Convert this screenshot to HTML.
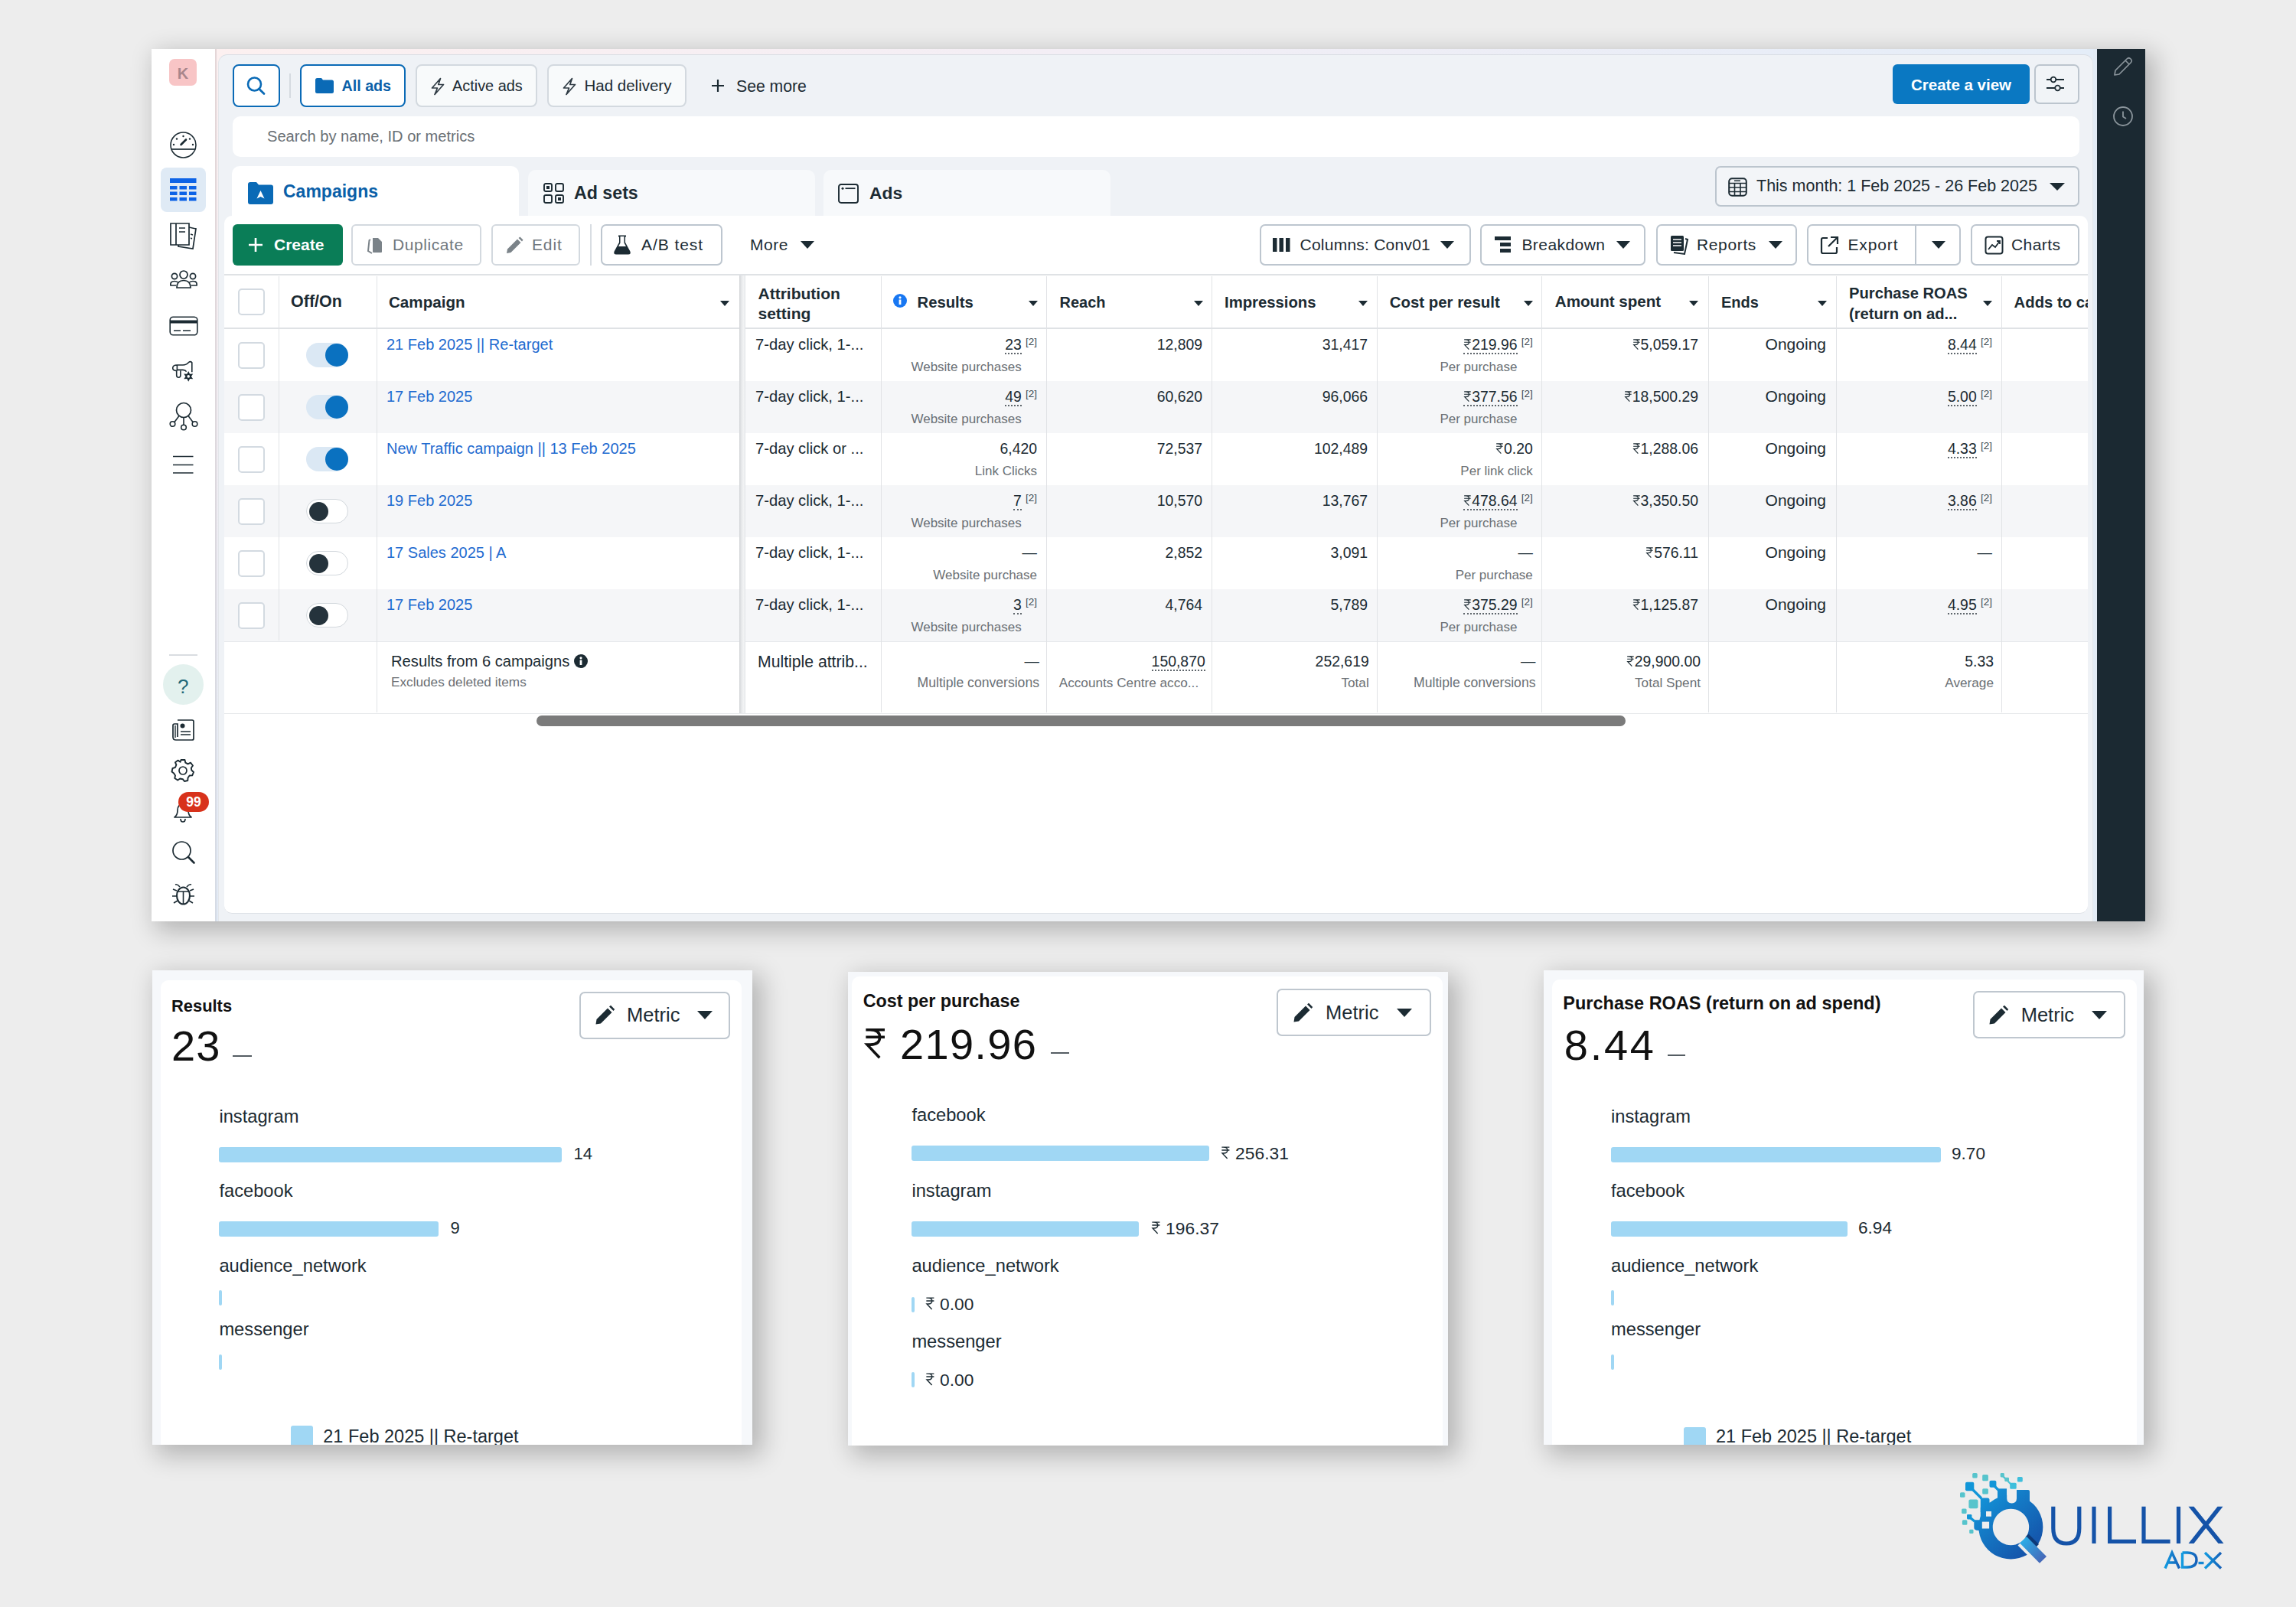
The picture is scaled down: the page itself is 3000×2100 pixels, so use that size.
<!DOCTYPE html>
<html><head><meta charset="utf-8"><style>*{box-sizing:border-box;margin:0;padding:0}
html,body{width:3000px;height:2100px;overflow:hidden}
body{background:#ededed;font-family:"Liberation Sans",sans-serif;color:#1c2b33;position:relative}
.a{position:absolute}
svg.a{overflow:visible}
.t{position:absolute;white-space:nowrap;line-height:1}
.rs{display:inline-block;width:0.56em;height:0.72em;vertical-align:0;overflow:visible}
#main{left:198px;top:64px;width:2605px;height:1140px;background:#fff;box-shadow:9px 9px 30px 4px rgba(0,0,0,.24)}
</style></head><body>
<div class="a" id="main"></div>
<div class="a" style="left:198px;top:64px;width:83px;height:1140px;background:#fff"></div>
<div class="a" style="left:281px;top:64px;width:1.5px;height:1140px;background:linear-gradient(#e4d6d7,#d5dbe5)"></div>
<div class="a" style="left:282.5px;top:64px;width:2457.5px;height:1140px;background:linear-gradient(90deg,#fcf0f0,#f3eef5 45%,#e4edf8)"></div>
<div class="a" style="left:282.5px;top:71px;width:2.5px;height:1133px;background:linear-gradient(#fbeff0,#e2eaf5)"></div>
<div class="a" style="left:285px;top:71px;width:2450px;height:1133px;background:#eff2f6;border-radius:12px 12px 0 0;border-top:1.5px solid #d9dde3;border-left:1.5px solid #e3e6ea;border-right:1.5px solid #e3e6ea"></div>
<div class="a" style="left:2735px;top:64px;width:5px;height:1140px;background:#e3ebf5"></div>
<div class="a" style="left:2740px;top:64px;width:63px;height:1140px;background:#1b2932"></div>
<div class="a" style="left:293px;top:282px;width:2435px;height:912px;background:#fff;border-radius:10px;border-bottom:1.5px solid #dde1e6"></div>
<div class="a" style="left:303px;top:217px;width:375px;height:70px;background:#fff;border-radius:10px 10px 0 0"></div>
<div class="a" style="left:690px;top:222px;width:375px;height:60px;background:#f7f9fb;border-radius:10px 10px 0 0"></div>
<div class="a" style="left:1076px;top:222px;width:375px;height:60px;background:#f7f9fb;border-radius:10px 10px 0 0"></div>
<div class="a" style="left:304px;top:84px;width:62px;height:56px;border:2px solid #0a6ab6;border-radius:8px;background:#fff"></div>
<svg class="a" style="left:320px;top:98px;" width="30" height="30" viewBox="0 0 30 30"><circle cx="12.5" cy="12" r="8.5" fill="none" stroke="#0a6ab6" stroke-width="2.6"/><line x1="18.6" y1="18.2" x2="25" y2="24.6" stroke="#0a6ab6" stroke-width="2.8" stroke-linecap="round"/></svg>
<div class="a" style="left:378px;top:96px;width:2px;height:32px;background:#d5dae0"></div>
<div class="a" style="left:392px;top:84px;width:138px;height:56px;border:2px solid #0a6ab6;border-radius:8px;background:#fff"></div>
<svg class="a" style="left:411px;top:101px;" width="26" height="22" viewBox="0 0 26 22"><path d="M1 3.5 Q1 1 3.5 1 L9 1 L11 3.5 L22.5 3.5 Q25 3.5 25 6 L25 18.5 Q25 21 22.5 21 L3.5 21 Q1 21 1 18.5 Z" fill="#0a6ab6"/></svg>
<div class="t" style="left:446.5px;top:102.8px;font-size:19.7px;font-weight:700;color:#0a5fa8;">All ads</div>
<div class="a" style="left:543px;top:84px;width:159px;height:56px;border:2px solid #d3d9df;border-radius:8px;background:#f8fafb"></div>
<svg class="a" style="left:563px;top:101px;" width="18" height="24" viewBox="0 0 18 24"><path d="M12.5 1.5 L1.5 14 H8.5 L5 22.5 L16.5 9.5 H9.8 Z" fill="none" stroke="#2f3b44" stroke-width="1.7" stroke-linejoin="round"/></svg>
<div class="t" style="left:591.0px;top:102.7px;font-size:19.9px;color:#1c2b33;">Active ads</div>
<div class="a" style="left:715px;top:84px;width:182px;height:56px;border:2px solid #d3d9df;border-radius:8px;background:#f8fafb"></div>
<svg class="a" style="left:735px;top:101px;" width="18" height="24" viewBox="0 0 18 24"><path d="M12.5 1.5 L1.5 14 H8.5 L5 22.5 L16.5 9.5 H9.8 Z" fill="none" stroke="#2f3b44" stroke-width="1.7" stroke-linejoin="round"/></svg>
<div class="t" style="left:763.5px;top:102.1px;font-size:20.5px;color:#1c2b33;">Had delivery</div>
<svg class="a" style="left:929px;top:103px;" width="18" height="18" viewBox="0 0 18 18"><path d="M9 1 V17 M1 9 H17" stroke="#1c2b33" stroke-width="2.2"/></svg>
<div class="t" style="left:962.0px;top:101.6px;font-size:21.2px;color:#1c2b33;">See more</div>
<div class="a" style="left:304px;top:152px;width:2413px;height:53px;background:#fff;border-radius:10px"></div>
<div class="t" style="left:349.0px;top:168.0px;font-size:20.1px;color:#6a7075;">Search by name, ID or metrics</div>
<div class="a" style="left:2473px;top:84px;width:179px;height:52px;background:#0a78c2;border-radius:6px"></div>
<div class="t" style="left:2497.0px;top:100.6px;font-size:20.5px;font-weight:700;color:#fff;">Create a view</div>
<div class="a" style="left:2658px;top:84px;width:59px;height:52px;border:2px solid #bcc5ce;border-radius:7px;background:#f1f4f7"></div>
<svg class="a" style="left:2673px;top:98px;" width="30" height="24" viewBox="0 0 30 24"><path d="M1 6 H6 M14 6 H24 M1 17 H12 M19 17 H24" stroke="#1c2b33" stroke-width="1.8"/><circle cx="10" cy="6" r="3.3" fill="none" stroke="#1c2b33" stroke-width="1.8"/><circle cx="15.5" cy="17" r="3.3" fill="none" stroke="#1c2b33" stroke-width="1.8"/></svg>
<div class="a" style="left:2241px;top:217px;width:476px;height:53px;border:2px solid #bcc5ce;border-radius:7px;background:#f3f5f8"></div>
<svg class="a" style="left:2258px;top:232px;" width="25" height="25" viewBox="0 0 25 25"><rect x="1.2" y="1.2" width="22.6" height="22.6" rx="4" fill="none" stroke="#1c2b33" stroke-width="2"/><path d="M1.5 7.5 H23.5 M1.5 13 H23.5 M1.5 18.5 H23.5 M8.5 7.5 V23.5 M16 7.5 V23.5 M8 4.2 H16" stroke="#1c2b33" stroke-width="1.6"/></svg>
<div class="t" style="left:2295.0px;top:232.8px;font-size:21.5px;color:#1c2b33;">This month: 1 Feb 2025 - 26 Feb 2025</div>
<svg class="a" style="left:2677px;top:238px;" width="22" height="12" viewBox="0 0 22 12"><path d="M1 1 H21 L11 11 Z" fill="#1c2b33"/></svg>
<svg class="a" style="left:2760px;top:72px;" width="28" height="28" viewBox="0 0 28 28"><path d="M4 20 L19 5 Q21.5 2.5 24 5 Q26.5 7.5 24 10 L9 25 L3 26 Z M17 7 L22 12" fill="none" stroke="#8a949b" stroke-width="1.7" stroke-linejoin="round"/></svg>
<svg class="a" style="left:2760px;top:138px;" width="28" height="28" viewBox="0 0 28 28"><circle cx="14" cy="14" r="12" fill="none" stroke="#8a949b" stroke-width="1.8"/><path d="M14 7.5 V14.5 L18 17" fill="none" stroke="#8a949b" stroke-width="1.8"/></svg>
<svg class="a" style="left:324px;top:237px;" width="33" height="30" viewBox="0 0 33 30"><path d="M0 4 Q0 1 3 1 L11 1 L14 4.5 L30 4.5 Q33 4.5 33 7.5 L33 27 Q33 30 30 30 L3 30 Q0 30 0 27 Z" fill="#0a6ab6"/><path d="M11.5 22.5 L16.5 12 L21.5 22.5 L16.5 20 Z" fill="#fff"/></svg>
<div class="t" style="left:370.0px;top:238.5px;font-size:23px;font-weight:700;color:#0a5fa8;">Campaigns</div>
<svg class="a" style="left:710px;top:238.5px;" width="27" height="27" viewBox="0 0 27 27"><rect x="1" y="1" width="10" height="10" rx="2" fill="none" stroke="#1c2b33" stroke-width="1.9"/><rect x="16" y="1" width="10" height="10" rx="2" fill="none" stroke="#1c2b33" stroke-width="1.9"/><rect x="1" y="16" width="10" height="10" rx="2" fill="none" stroke="#1c2b33" stroke-width="1.9"/><rect x="16" y="16" width="10" height="10" rx="2" fill="none" stroke="#1c2b33" stroke-width="1.9"/><rect x="4" y="4" width="4" height="4" fill="#1c2b33"/><rect x="19" y="19" width="4" height="4" fill="#1c2b33"/></svg>
<div class="t" style="left:750.0px;top:240.7px;font-size:23.2px;font-weight:700;color:#1c2b33;">Ad sets</div>
<svg class="a" style="left:1095px;top:239.5px;" width="27" height="26" viewBox="0 0 27 26"><rect x="1" y="1" width="25" height="24" rx="3" fill="none" stroke="#1c2b33" stroke-width="1.9"/><circle cx="6" cy="6.2" r="1.5" fill="#1c2b33"/><path d="M9.5 6.2 H22.5" stroke="#1c2b33" stroke-width="1.7"/></svg>
<div class="t" style="left:1136.0px;top:241.0px;font-size:22.8px;font-weight:700;color:#1c2b33;">Ads</div>
<div class="a" style="left:304px;top:293px;width:144px;height:54px;background:#0a7d57;border-radius:6px"></div>
<svg class="a" style="left:323px;top:309px;" width="22" height="22" viewBox="0 0 22 22"><path d="M11 2 V20 M2 11 H20" stroke="#fff" stroke-width="2.6"/></svg>
<div class="t" style="left:358.0px;top:309.2px;font-size:21px;font-weight:700;color:#fff;">Create</div>
<div class="a" style="left:459px;top:293px;width:170px;height:54px;border:2px solid #d3d9df;border-radius:6px;background:#fff"></div>
<svg class="a" style="left:478px;top:308px;" width="24" height="24" viewBox="0 0 24 24"><path d="M9 3 L16 3 L21 8 L21 21 Q21 22 20 22 L10 22 Q9 22 9 21 Z" fill="#7b8389"/><path d="M6 5 L4.5 6 L3 20 L8 23" fill="none" stroke="#7b8389" stroke-width="2"/></svg>
<div class="t" style="left:513.0px;top:309.2px;font-size:21px;color:#70777d;letter-spacing:0.58px">Duplicate</div>
<div class="a" style="left:642px;top:293px;width:116px;height:54px;border:2px solid #d3d9df;border-radius:6px;background:#fff"></div>
<svg class="a" style="left:660px;top:309px;" width="24" height="24" viewBox="0 0 24 24"><path d="M2 22 L3 16.5 L16 3.5 L20.5 8 L7.5 21 Z" fill="#7b8389"/><path d="M17.5 2 L19.5 0.5 L23.5 4.5 L22 6.5 Z" fill="#7b8389"/></svg>
<div class="t" style="left:695.0px;top:309.2px;font-size:21px;color:#70777d;letter-spacing:0.85px">Edit</div>
<div class="a" style="left:771px;top:293px;width:2px;height:54px;background:#d8dde2"></div>
<div class="a" style="left:785px;top:293px;width:159px;height:54px;border:2px solid #bdc6cf;border-radius:7px;background:#fff"></div>
<svg class="a" style="left:801px;top:307px;" width="24" height="26" viewBox="0 0 24 26"><path d="M7 1.5 H17 M9 2 V10 L2.5 22 Q1.5 24.5 4 24.5 H20 Q22.5 24.5 21.5 22 L15 10 V2" fill="#1c2b33" stroke="#1c2b33" stroke-width="2" stroke-linejoin="round"/><path d="M9.5 2 V10.5 L7 15 H17 L14.5 10.5 V2 Z" fill="#fff"/></svg>
<div class="t" style="left:838.0px;top:309.2px;font-size:21px;color:#1c2b33;letter-spacing:0.94px">A/B test</div>
<div class="t" style="left:980.0px;top:309.2px;font-size:21px;color:#1c2b33;letter-spacing:0.53px">More</div>
<svg class="a" style="left:1046px;top:315px;" width="18" height="10" viewBox="0 0 18 10"><path d="M0 0 H18 L9 10 Z" fill="#1c2b33"/></svg>
<div class="a" style="left:1646px;top:293px;width:276px;height:54px;border:2px solid #bdc6cf;border-radius:7px;background:#fff"></div>
<div class="a" style="left:1934px;top:293px;width:216px;height:54px;border:2px solid #bdc6cf;border-radius:7px;background:#fff"></div>
<div class="a" style="left:2164px;top:293px;width:184px;height:54px;border:2px solid #bdc6cf;border-radius:7px;background:#fff"></div>
<div class="a" style="left:2361px;top:293px;width:201px;height:54px;border:2px solid #bdc6cf;border-radius:7px;background:#fff"></div>
<div class="a" style="left:2575px;top:293px;width:142px;height:54px;border:2px solid #bdc6cf;border-radius:7px;background:#fff"></div>
<div class="a" style="left:2502px;top:295px;width:2px;height:50px;background:#bdc6cf"></div>
<svg class="a" style="left:1663px;top:310px;" width="24" height="20" viewBox="0 0 24 20"><rect x="0" y="1" width="5.5" height="18" fill="#1c2b33"/><rect x="8.5" y="1" width="5.5" height="18" fill="#1c2b33"/><rect x="17" y="1" width="5.5" height="18" fill="#1c2b33"/></svg>
<div class="t" style="left:1698.5px;top:309.2px;font-size:21px;color:#1c2b33;letter-spacing:0.24px">Columns: Conv01</div>
<svg class="a" style="left:1882px;top:315px;" width="18" height="10" viewBox="0 0 18 10"><path d="M0 0 H18 L9 10 Z" fill="#1c2b33"/></svg>
<svg class="a" style="left:1952px;top:308px;" width="24" height="24" viewBox="0 0 24 24"><rect x="1" y="1" width="21" height="5" fill="#1c2b33"/><rect x="8" y="9" width="14" height="5" fill="#1c2b33"/><rect x="8" y="17" width="14" height="5" fill="#1c2b33"/></svg>
<div class="t" style="left:1988.4px;top:309.2px;font-size:21px;color:#1c2b33;letter-spacing:0.44px">Breakdown</div>
<svg class="a" style="left:2112px;top:315px;" width="18" height="10" viewBox="0 0 18 10"><path d="M0 0 H18 L9 10 Z" fill="#1c2b33"/></svg>
<svg class="a" style="left:2181px;top:307px;" width="26" height="26" viewBox="0 0 26 26"><rect x="2" y="1" width="17" height="20" rx="1.5" fill="#1c2b33"/><path d="M5 6 H16 M5 10 H16 M5 14 H16" stroke="#fff" stroke-width="1.6"/><path d="M21 5 L24 6 L20 25 L6 23" fill="none" stroke="#1c2b33" stroke-width="2"/></svg>
<div class="t" style="left:2217.0px;top:309.2px;font-size:21px;color:#1c2b33;letter-spacing:0.64px">Reports</div>
<svg class="a" style="left:2311px;top:315px;" width="18" height="10" viewBox="0 0 18 10"><path d="M0 0 H18 L9 10 Z" fill="#1c2b33"/></svg>
<svg class="a" style="left:2378px;top:308px;" width="25" height="25" viewBox="0 0 25 25"><path d="M10 3 H4 Q2 3 2 5 V21 Q2 23 4 23 H20 Q22 23 22 21 V15" fill="none" stroke="#1c2b33" stroke-width="2.2"/><path d="M14 2 H23 V11 M23 2 L11 14" fill="none" stroke="#1c2b33" stroke-width="2.2"/></svg>
<div class="t" style="left:2414.4px;top:309.2px;font-size:21px;color:#1c2b33;letter-spacing:0.88px">Export</div>
<svg class="a" style="left:2524px;top:315px;" width="18" height="10" viewBox="0 0 18 10"><path d="M0 0 H18 L9 10 Z" fill="#1c2b33"/></svg>
<svg class="a" style="left:2593px;top:308px;" width="25" height="25" viewBox="0 0 25 25"><rect x="1.5" y="1.5" width="22" height="22" rx="3" fill="none" stroke="#1c2b33" stroke-width="2"/><path d="M5 18 L10 12 L14 15 L20 7 M16 7 H20 V11" fill="none" stroke="#1c2b33" stroke-width="1.8"/></svg>
<div class="t" style="left:2628.0px;top:309.2px;font-size:21px;color:#1c2b33;letter-spacing:0.45px">Charts</div>
<div class="a" style="left:293px;top:498px;width:2435px;height:68px;background:#f5f6f8"></div>
<div class="a" style="left:293px;top:634px;width:2435px;height:68px;background:#f5f6f8"></div>
<div class="a" style="left:293px;top:770px;width:2435px;height:68px;background:#f5f6f8"></div>
<div class="a" style="left:293px;top:358px;width:2435px;height:2px;background:#dfe2e5"></div>
<div class="a" style="left:293px;top:428px;width:2435px;height:2px;background:#dfe2e5"></div>
<div class="a" style="left:293px;top:838px;width:2435px;height:1px;background:#e6e8eb"></div>
<div class="a" style="left:293px;top:932px;width:2435px;height:1px;background:#e6e8eb"></div>
<div class="a" style="left:364px;top:361px;width:1px;height:476px;background:#e1e3e6"></div>
<div class="a" style="left:492px;top:361px;width:1px;height:570px;background:#e1e3e6"></div>
<div class="a" style="left:1151px;top:361px;width:1px;height:570px;background:#e1e3e6"></div>
<div class="a" style="left:1367px;top:361px;width:1px;height:570px;background:#e1e3e6"></div>
<div class="a" style="left:1583px;top:361px;width:1px;height:570px;background:#e1e3e6"></div>
<div class="a" style="left:1799px;top:361px;width:1px;height:570px;background:#e1e3e6"></div>
<div class="a" style="left:2014px;top:361px;width:1px;height:570px;background:#e1e3e6"></div>
<div class="a" style="left:2232px;top:361px;width:1px;height:570px;background:#e1e3e6"></div>
<div class="a" style="left:2399px;top:361px;width:1px;height:570px;background:#e1e3e6"></div>
<div class="a" style="left:2615px;top:361px;width:1px;height:570px;background:#e1e3e6"></div>
<div class="a" style="left:966px;top:360px;width:8px;height:572px;background:linear-gradient(90deg,#d2d4d7,#e9ebed 40%,#f3f4f5 75%,#dfe2e5)"></div>
<div class="a" style="left:311px;top:377px;width:35px;height:35px;border:2px solid #d3dae1;border-radius:5px;background:#fff"></div>
<div class="t" style="left:380.0px;top:383.8px;font-size:21.5px;font-weight:700;color:#1c2b33;">Off/On</div>
<div class="t" style="left:508.0px;top:384.6px;font-size:20.6px;font-weight:700;color:#1c2b33;">Campaign</div>
<svg class="a" style="left:940.7px;top:393.0px;" width="12" height="7" viewBox="0 0 12 7"><path d="M0 0 H12 L6 7 Z" fill="#1c2b33"/></svg>
<div class="t" style="left:990.5px;top:372.7px;font-size:21.0px;font-weight:700;color:#1c2b33;">Attribution</div>
<div class="t" style="left:990.5px;top:399.2px;font-size:21.0px;font-weight:700;color:#1c2b33;">setting</div>
<svg class="a" style="left:1167px;top:384px;" width="18" height="18" viewBox="0 0 18 18"><circle cx="9" cy="9" r="9" fill="#1877f2"/><rect x="7.6" y="7.5" width="2.8" height="6.5" fill="#fff"/><circle cx="9" cy="4.8" r="1.6" fill="#fff"/></svg>
<div class="t" style="left:1198.5px;top:384.6px;font-size:20.3px;font-weight:700;color:#1c2b33;">Results</div>
<svg class="a" style="left:1343.5px;top:393.0px;" width="12" height="7" viewBox="0 0 12 7"><path d="M0 0 H12 L6 7 Z" fill="#1c2b33"/></svg>
<div class="t" style="left:1384.5px;top:384.9px;font-size:20.0px;font-weight:700;color:#1c2b33;">Reach</div>
<svg class="a" style="left:1559.7px;top:393.0px;" width="12" height="7" viewBox="0 0 12 7"><path d="M0 0 H12 L6 7 Z" fill="#1c2b33"/></svg>
<div class="t" style="left:1600.0px;top:384.6px;font-size:20.3px;font-weight:700;color:#1c2b33;">Impressions</div>
<svg class="a" style="left:1775px;top:393.0px;" width="12" height="7" viewBox="0 0 12 7"><path d="M0 0 H12 L6 7 Z" fill="#1c2b33"/></svg>
<div class="t" style="left:1815.8px;top:384.5px;font-size:20.4px;font-weight:700;color:#1c2b33;">Cost per result</div>
<svg class="a" style="left:1991px;top:393.0px;" width="12" height="7" viewBox="0 0 12 7"><path d="M0 0 H12 L6 7 Z" fill="#1c2b33"/></svg>
<div class="t" style="left:2031.8px;top:384.4px;font-size:20.6px;font-weight:700;color:#1c2b33;">Amount spent</div>
<svg class="a" style="left:2207px;top:393.0px;" width="12" height="7" viewBox="0 0 12 7"><path d="M0 0 H12 L6 7 Z" fill="#1c2b33"/></svg>
<div class="t" style="left:2249.0px;top:384.9px;font-size:20.0px;font-weight:700;color:#1c2b33;">Ends</div>
<svg class="a" style="left:2375px;top:393.0px;" width="12" height="7" viewBox="0 0 12 7"><path d="M0 0 H12 L6 7 Z" fill="#1c2b33"/></svg>
<div class="t" style="left:2416.0px;top:373.4px;font-size:20.2px;font-weight:700;color:#1c2b33;">Purchase ROAS</div>
<div class="t" style="left:2416.0px;top:399.9px;font-size:20.2px;font-weight:700;color:#1c2b33;">(return on ad...</div>
<svg class="a" style="left:2590.6px;top:393.0px;" width="12" height="7" viewBox="0 0 12 7"><path d="M0 0 H12 L6 7 Z" fill="#1c2b33"/></svg>
<div class="a" style="left:2615px;top:360px;width:113px;height:68px;overflow:hidden">
<div class="t" style="left:16.6px;top:24.6px;font-size:20.3px;font-weight:700;color:#1c2b33;">Adds to cart</div>
</div>
<div class="a" style="left:311px;top:447px;width:35px;height:35px;border:2px solid #d3dae1;border-radius:5px;background:#fff"></div>
<div class="a" style="left:400px;top:448px;width:55px;height:32px;background:#dbe8f4;border-radius:16px"></div>
<div class="a" style="left:425px;top:449px;width:30px;height:30px;background:#0a71c0;border-radius:50%"></div>
<div class="t" style="left:505.0px;top:440.1px;font-size:20.0px;color:#1f6bd0;">21 Feb 2025 || Re-target</div>
<div class="t" style="left:987.0px;top:439.9px;font-size:20.2px;color:#1c2b33;">7-day click, 1-...</div>
<div class="t" style="right:1665.3px;top:440.6px;font-size:19.4px;color:#1c2b33;"><span style="border-bottom:2px dotted #5f666c;padding-bottom:0px">23</span></div>
<div class="t" style="right:1645.0px;top:440.1px;font-size:13.5px;color:#3d474e;">[2]</div>
<div class="t" style="right:1665.3px;top:470.9px;font-size:17.0px;color:#6b7075;">Website purchases</div>
<div class="t" style="right:1429.0px;top:440.6px;font-size:19.4px;color:#1c2b33;">12,809</div>
<div class="t" style="right:1213.0px;top:440.6px;font-size:19.4px;color:#1c2b33;">31,417</div>
<div class="t" style="right:1017.5px;top:440.6px;font-size:19.4px;color:#1c2b33;"><span style="border-bottom:2px dotted #5f666c;padding-bottom:0px"><svg class="rs" viewBox="0 0 56 72"><path d="M6 5 H50 M6 22 H50 M16 5 Q38.5 5 38.5 22 Q38.5 39.5 17 39.5 H9 L38 70" fill="none" stroke="currentColor" stroke-width="6.3"/></svg>219.96</span></div>
<div class="t" style="right:997.2px;top:440.1px;font-size:13.5px;color:#3d474e;">[2]</div>
<div class="t" style="right:1017.5px;top:470.9px;font-size:17.0px;color:#6b7075;">Per purchase</div>
<div class="t" style="right:781.0px;top:440.6px;font-size:19.4px;color:#1c2b33;"><svg class="rs" viewBox="0 0 56 72"><path d="M6 5 H50 M6 22 H50 M16 5 Q38.5 5 38.5 22 Q38.5 39.5 17 39.5 H9 L38 70" fill="none" stroke="currentColor" stroke-width="6.3"/></svg>5,059.17</div>
<div class="t" style="right:614.0px;top:439.2px;font-size:21.0px;color:#1c2b33;">Ongoing</div>
<div class="t" style="right:417.3px;top:440.6px;font-size:19.4px;color:#1c2b33;"><span style="border-bottom:2px dotted #5f666c;padding-bottom:0px">8.44</span></div>
<div class="t" style="right:397.0px;top:440.1px;font-size:13.5px;color:#3d474e;">[2]</div>
<div class="a" style="left:311px;top:515px;width:35px;height:35px;border:2px solid #d3dae1;border-radius:5px;background:#fff"></div>
<div class="a" style="left:400px;top:516px;width:55px;height:32px;background:#dbe8f4;border-radius:16px"></div>
<div class="a" style="left:425px;top:517px;width:30px;height:30px;background:#0a71c0;border-radius:50%"></div>
<div class="t" style="left:505.0px;top:508.1px;font-size:20.0px;color:#1f6bd0;">17 Feb 2025</div>
<div class="t" style="left:987.0px;top:507.9px;font-size:20.2px;color:#1c2b33;">7-day click, 1-...</div>
<div class="t" style="right:1665.3px;top:508.6px;font-size:19.4px;color:#1c2b33;"><span style="border-bottom:2px dotted #5f666c;padding-bottom:0px">49</span></div>
<div class="t" style="right:1645.0px;top:508.1px;font-size:13.5px;color:#3d474e;">[2]</div>
<div class="t" style="right:1665.3px;top:538.9px;font-size:17.0px;color:#6b7075;">Website purchases</div>
<div class="t" style="right:1429.0px;top:508.6px;font-size:19.4px;color:#1c2b33;">60,620</div>
<div class="t" style="right:1213.0px;top:508.6px;font-size:19.4px;color:#1c2b33;">96,066</div>
<div class="t" style="right:1017.5px;top:508.6px;font-size:19.4px;color:#1c2b33;"><span style="border-bottom:2px dotted #5f666c;padding-bottom:0px"><svg class="rs" viewBox="0 0 56 72"><path d="M6 5 H50 M6 22 H50 M16 5 Q38.5 5 38.5 22 Q38.5 39.5 17 39.5 H9 L38 70" fill="none" stroke="currentColor" stroke-width="6.3"/></svg>377.56</span></div>
<div class="t" style="right:997.2px;top:508.1px;font-size:13.5px;color:#3d474e;">[2]</div>
<div class="t" style="right:1017.5px;top:538.9px;font-size:17.0px;color:#6b7075;">Per purchase</div>
<div class="t" style="right:781.0px;top:508.6px;font-size:19.4px;color:#1c2b33;"><svg class="rs" viewBox="0 0 56 72"><path d="M6 5 H50 M6 22 H50 M16 5 Q38.5 5 38.5 22 Q38.5 39.5 17 39.5 H9 L38 70" fill="none" stroke="currentColor" stroke-width="6.3"/></svg>18,500.29</div>
<div class="t" style="right:614.0px;top:507.2px;font-size:21.0px;color:#1c2b33;">Ongoing</div>
<div class="t" style="right:417.3px;top:508.6px;font-size:19.4px;color:#1c2b33;"><span style="border-bottom:2px dotted #5f666c;padding-bottom:0px">5.00</span></div>
<div class="t" style="right:397.0px;top:508.1px;font-size:13.5px;color:#3d474e;">[2]</div>
<div class="a" style="left:311px;top:583px;width:35px;height:35px;border:2px solid #d3dae1;border-radius:5px;background:#fff"></div>
<div class="a" style="left:400px;top:584px;width:55px;height:32px;background:#dbe8f4;border-radius:16px"></div>
<div class="a" style="left:425px;top:585px;width:30px;height:30px;background:#0a71c0;border-radius:50%"></div>
<div class="t" style="left:505.0px;top:576.1px;font-size:20.0px;color:#1f6bd0;">New Traffic campaign || 13 Feb 2025</div>
<div class="t" style="left:987.0px;top:575.9px;font-size:20.2px;color:#1c2b33;">7-day click or ...</div>
<div class="t" style="right:1645.0px;top:576.6px;font-size:19.4px;color:#1c2b33;">6,420</div>
<div class="t" style="right:1645.0px;top:606.9px;font-size:17.0px;color:#6b7075;">Link Clicks</div>
<div class="t" style="right:1429.0px;top:576.6px;font-size:19.4px;color:#1c2b33;">72,537</div>
<div class="t" style="right:1213.0px;top:576.6px;font-size:19.4px;color:#1c2b33;">102,489</div>
<div class="t" style="right:997.2px;top:576.6px;font-size:19.4px;color:#1c2b33;"><svg class="rs" viewBox="0 0 56 72"><path d="M6 5 H50 M6 22 H50 M16 5 Q38.5 5 38.5 22 Q38.5 39.5 17 39.5 H9 L38 70" fill="none" stroke="currentColor" stroke-width="6.3"/></svg>0.20</div>
<div class="t" style="right:997.2px;top:606.9px;font-size:17.0px;color:#6b7075;">Per link click</div>
<div class="t" style="right:781.0px;top:576.6px;font-size:19.4px;color:#1c2b33;"><svg class="rs" viewBox="0 0 56 72"><path d="M6 5 H50 M6 22 H50 M16 5 Q38.5 5 38.5 22 Q38.5 39.5 17 39.5 H9 L38 70" fill="none" stroke="currentColor" stroke-width="6.3"/></svg>1,288.06</div>
<div class="t" style="right:614.0px;top:575.2px;font-size:21.0px;color:#1c2b33;">Ongoing</div>
<div class="t" style="right:417.3px;top:576.6px;font-size:19.4px;color:#1c2b33;"><span style="border-bottom:2px dotted #5f666c;padding-bottom:0px">4.33</span></div>
<div class="t" style="right:397.0px;top:576.1px;font-size:13.5px;color:#3d474e;">[2]</div>
<div class="a" style="left:311px;top:651px;width:35px;height:35px;border:2px solid #d3dae1;border-radius:5px;background:#fff"></div>
<div class="a" style="left:400px;top:652px;width:55px;height:32px;background:#fff;border:1.5px solid #d3d8dd;border-radius:16px"></div>
<div class="a" style="left:403.5px;top:655.5px;width:25px;height:25px;background:#25333c;border-radius:50%"></div>
<div class="t" style="left:505.0px;top:644.1px;font-size:20.0px;color:#1f6bd0;">19 Feb 2025</div>
<div class="t" style="left:987.0px;top:643.9px;font-size:20.2px;color:#1c2b33;">7-day click, 1-...</div>
<div class="t" style="right:1665.3px;top:644.6px;font-size:19.4px;color:#1c2b33;"><span style="border-bottom:2px dotted #5f666c;padding-bottom:0px">7</span></div>
<div class="t" style="right:1645.0px;top:644.1px;font-size:13.5px;color:#3d474e;">[2]</div>
<div class="t" style="right:1665.3px;top:674.9px;font-size:17.0px;color:#6b7075;">Website purchases</div>
<div class="t" style="right:1429.0px;top:644.6px;font-size:19.4px;color:#1c2b33;">10,570</div>
<div class="t" style="right:1213.0px;top:644.6px;font-size:19.4px;color:#1c2b33;">13,767</div>
<div class="t" style="right:1017.5px;top:644.6px;font-size:19.4px;color:#1c2b33;"><span style="border-bottom:2px dotted #5f666c;padding-bottom:0px"><svg class="rs" viewBox="0 0 56 72"><path d="M6 5 H50 M6 22 H50 M16 5 Q38.5 5 38.5 22 Q38.5 39.5 17 39.5 H9 L38 70" fill="none" stroke="currentColor" stroke-width="6.3"/></svg>478.64</span></div>
<div class="t" style="right:997.2px;top:644.1px;font-size:13.5px;color:#3d474e;">[2]</div>
<div class="t" style="right:1017.5px;top:674.9px;font-size:17.0px;color:#6b7075;">Per purchase</div>
<div class="t" style="right:781.0px;top:644.6px;font-size:19.4px;color:#1c2b33;"><svg class="rs" viewBox="0 0 56 72"><path d="M6 5 H50 M6 22 H50 M16 5 Q38.5 5 38.5 22 Q38.5 39.5 17 39.5 H9 L38 70" fill="none" stroke="currentColor" stroke-width="6.3"/></svg>3,350.50</div>
<div class="t" style="right:614.0px;top:643.2px;font-size:21.0px;color:#1c2b33;">Ongoing</div>
<div class="t" style="right:417.3px;top:644.6px;font-size:19.4px;color:#1c2b33;"><span style="border-bottom:2px dotted #5f666c;padding-bottom:0px">3.86</span></div>
<div class="t" style="right:397.0px;top:644.1px;font-size:13.5px;color:#3d474e;">[2]</div>
<div class="a" style="left:311px;top:719px;width:35px;height:35px;border:2px solid #d3dae1;border-radius:5px;background:#fff"></div>
<div class="a" style="left:400px;top:720px;width:55px;height:32px;background:#fff;border:1.5px solid #d3d8dd;border-radius:16px"></div>
<div class="a" style="left:403.5px;top:723.5px;width:25px;height:25px;background:#25333c;border-radius:50%"></div>
<div class="t" style="left:505.0px;top:712.1px;font-size:20.0px;color:#1f6bd0;">17 Sales 2025 | A</div>
<div class="t" style="left:987.0px;top:711.9px;font-size:20.2px;color:#1c2b33;">7-day click, 1-...</div>
<div class="t" style="right:1645.0px;top:712.6px;font-size:19.4px;color:#1c2b33;">—</div>
<div class="t" style="right:1645.0px;top:742.9px;font-size:17.0px;color:#6b7075;">Website purchase</div>
<div class="t" style="right:1429.0px;top:712.6px;font-size:19.4px;color:#1c2b33;">2,852</div>
<div class="t" style="right:1213.0px;top:712.6px;font-size:19.4px;color:#1c2b33;">3,091</div>
<div class="t" style="right:997.2px;top:712.6px;font-size:19.4px;color:#1c2b33;">—</div>
<div class="t" style="right:997.2px;top:742.9px;font-size:17.0px;color:#6b7075;">Per purchase</div>
<div class="t" style="right:781.0px;top:712.6px;font-size:19.4px;color:#1c2b33;"><svg class="rs" viewBox="0 0 56 72"><path d="M6 5 H50 M6 22 H50 M16 5 Q38.5 5 38.5 22 Q38.5 39.5 17 39.5 H9 L38 70" fill="none" stroke="currentColor" stroke-width="6.3"/></svg>576.11</div>
<div class="t" style="right:614.0px;top:711.2px;font-size:21.0px;color:#1c2b33;">Ongoing</div>
<div class="t" style="right:397.0px;top:712.6px;font-size:19.4px;color:#1c2b33;">—</div>
<div class="a" style="left:311px;top:787px;width:35px;height:35px;border:2px solid #d3dae1;border-radius:5px;background:#fff"></div>
<div class="a" style="left:400px;top:788px;width:55px;height:32px;background:#fff;border:1.5px solid #d3d8dd;border-radius:16px"></div>
<div class="a" style="left:403.5px;top:791.5px;width:25px;height:25px;background:#25333c;border-radius:50%"></div>
<div class="t" style="left:505.0px;top:780.1px;font-size:20.0px;color:#1f6bd0;">17 Feb 2025</div>
<div class="t" style="left:987.0px;top:779.9px;font-size:20.2px;color:#1c2b33;">7-day click, 1-...</div>
<div class="t" style="right:1665.3px;top:780.6px;font-size:19.4px;color:#1c2b33;"><span style="border-bottom:2px dotted #5f666c;padding-bottom:0px">3</span></div>
<div class="t" style="right:1645.0px;top:780.1px;font-size:13.5px;color:#3d474e;">[2]</div>
<div class="t" style="right:1665.3px;top:810.9px;font-size:17.0px;color:#6b7075;">Website purchases</div>
<div class="t" style="right:1429.0px;top:780.6px;font-size:19.4px;color:#1c2b33;">4,764</div>
<div class="t" style="right:1213.0px;top:780.6px;font-size:19.4px;color:#1c2b33;">5,789</div>
<div class="t" style="right:1017.5px;top:780.6px;font-size:19.4px;color:#1c2b33;"><span style="border-bottom:2px dotted #5f666c;padding-bottom:0px"><svg class="rs" viewBox="0 0 56 72"><path d="M6 5 H50 M6 22 H50 M16 5 Q38.5 5 38.5 22 Q38.5 39.5 17 39.5 H9 L38 70" fill="none" stroke="currentColor" stroke-width="6.3"/></svg>375.29</span></div>
<div class="t" style="right:997.2px;top:780.1px;font-size:13.5px;color:#3d474e;">[2]</div>
<div class="t" style="right:1017.5px;top:810.9px;font-size:17.0px;color:#6b7075;">Per purchase</div>
<div class="t" style="right:781.0px;top:780.6px;font-size:19.4px;color:#1c2b33;"><svg class="rs" viewBox="0 0 56 72"><path d="M6 5 H50 M6 22 H50 M16 5 Q38.5 5 38.5 22 Q38.5 39.5 17 39.5 H9 L38 70" fill="none" stroke="currentColor" stroke-width="6.3"/></svg>1,125.87</div>
<div class="t" style="right:614.0px;top:779.2px;font-size:21.0px;color:#1c2b33;">Ongoing</div>
<div class="t" style="right:417.3px;top:780.6px;font-size:19.4px;color:#1c2b33;"><span style="border-bottom:2px dotted #5f666c;padding-bottom:0px">4.95</span></div>
<div class="t" style="right:397.0px;top:780.1px;font-size:13.5px;color:#3d474e;">[2]</div>
<div class="t" style="left:511.0px;top:853.5px;font-size:20.2px;color:#1c2b33;">Results from 6 campaigns</div>
<svg class="a" style="left:750px;top:855px;" width="18" height="18" viewBox="0 0 18 18"><circle cx="9" cy="9" r="9" fill="#1c2b33"/><rect x="7.6" y="7.5" width="2.8" height="6.5" fill="#fff"/><circle cx="9" cy="4.8" r="1.6" fill="#fff"/></svg>
<div class="t" style="left:511.0px;top:882.9px;font-size:17.2px;color:#6b7075;">Excludes deleted items</div>
<div class="t" style="left:990.0px;top:853.6px;font-size:21.2px;color:#1c2b33;">Multiple attrib...</div>
<div class="t" style="right:1642.0px;top:855.1px;font-size:19.4px;color:#1c2b33;">—</div>
<div class="t" style="right:1642.0px;top:884.1px;font-size:17.6px;color:#6b7075;">Multiple conversions</div>
<div class="t" style="right:1425.3px;top:855.1px;font-size:19.4px;color:#1c2b33;"><span style="border-bottom:2px dotted #5f666c">150,870</span></div>
<div class="t" style="left:1383.7px;top:884.4px;font-size:17.2px;color:#6b7075;">Accounts Centre acco...</div>
<div class="t" style="right:1211.3px;top:855.1px;font-size:19.4px;color:#1c2b33;">252,619</div>
<div class="t" style="right:1211.3px;top:884.4px;font-size:17.2px;color:#6b7075;">Total</div>
<div class="t" style="right:993.5px;top:855.1px;font-size:19.4px;color:#1c2b33;">—</div>
<div class="t" style="right:993.5px;top:884.1px;font-size:17.6px;color:#6b7075;">Multiple conversions</div>
<div class="t" style="right:778.0px;top:855.1px;font-size:19.4px;color:#1c2b33;"><svg class="rs" viewBox="0 0 56 72"><path d="M6 5 H50 M6 22 H50 M16 5 Q38.5 5 38.5 22 Q38.5 39.5 17 39.5 H9 L38 70" fill="none" stroke="currentColor" stroke-width="6.3"/></svg>29,900.00</div>
<div class="t" style="right:778.0px;top:884.4px;font-size:17.2px;color:#6b7075;">Total Spent</div>
<div class="t" style="right:395.0px;top:855.1px;font-size:19.4px;color:#1c2b33;">5.33</div>
<div class="t" style="right:395.0px;top:884.4px;font-size:17.2px;color:#6b7075;">Average</div>
<div class="a" style="left:701px;top:934.5px;width:1423px;height:14px;background:#7b7b7b;border-radius:7px"></div>
<div class="a" style="left:221px;top:77px;width:36px;height:35px;background:#f8c5c6;border-radius:7px"></div>
<div class="t" style="left:239.0px;top:85.6px;font-size:20px;font-weight:700;color:#a8868b;transform:translateX(-50%)">K</div>
<svg class="a" style="left:221px;top:171px;" width="37" height="37" viewBox="0 0 37 37"><circle cx="18.5" cy="18.5" r="16.5" fill="none" stroke="#1c2b33" stroke-width="1.6"/><path d="M3 24 H34" stroke="#1c2b33" stroke-width="1.7"/><path d="M15.5 18 L22 11.5" stroke="#1c2b33" stroke-width="2.6" stroke-linecap="round"/><circle cx="18.5" cy="7" r="1.2" fill="#1c2b33"/><circle cx="10" cy="10.5" r="1.2" fill="#1c2b33"/><circle cx="27" cy="10.5" r="1.2" fill="#1c2b33"/><circle cx="6" cy="18" r="1.2" fill="#1c2b33"/><circle cx="31" cy="18" r="1.2" fill="#1c2b33"/></svg>
<div class="a" style="left:210px;top:219px;width:59px;height:58px;background:#dfeaf5;border-radius:8px"></div>
<svg class="a" style="left:222px;top:233px;" width="35" height="30" viewBox="0 0 35 30"><rect x="0" y="0" width="34.5" height="6" fill="#0d63e6"/><rect x="0" y="10" width="9.5" height="4.5" fill="#0d63e6"/><rect x="12.5" y="10" width="9.5" height="4.5" fill="#0d63e6"/><rect x="25" y="10" width="9.5" height="4.5" fill="#0d63e6"/><rect x="0" y="17.5" width="9.5" height="4.5" fill="#0d63e6"/><rect x="12.5" y="17.5" width="9.5" height="4.5" fill="#0d63e6"/><rect x="25" y="17.5" width="9.5" height="4.5" fill="#0d63e6"/><rect x="0" y="25" width="9.5" height="4.5" fill="#0d63e6"/><rect x="12.5" y="25" width="9.5" height="4.5" fill="#0d63e6"/><rect x="25" y="25" width="9.5" height="4.5" fill="#0d63e6"/></svg>
<svg class="a" style="left:221px;top:290px;" width="38" height="36" viewBox="0 0 38 36"><path d="M2 2 H26 V30 H2 Z M9 2 V30" fill="none" stroke="#1c2b33" stroke-width="1.7"/><path d="M13 8 H21 M13 13 H21" stroke="#1c2b33" stroke-width="1.6"/><path d="M26 7 L35 9 L31 35 L12 32 V30" fill="none" stroke="#1c2b33" stroke-width="1.7"/><path d="M28 16 L31 17 M28 21 L30 22" stroke="#1c2b33" stroke-width="1.5"/></svg>
<svg class="a" style="left:221px;top:352px;" width="38" height="26" viewBox="0 0 38 26"><circle cx="19" cy="7" r="5" fill="none" stroke="#1c2b33" stroke-width="1.7"/><circle cx="7" cy="9" r="3.6" fill="none" stroke="#1c2b33" stroke-width="1.7"/><circle cx="31" cy="9" r="3.6" fill="none" stroke="#1c2b33" stroke-width="1.7"/><path d="M10 24 Q10 14.5 19 14.5 Q28 14.5 28 24 Z" fill="none" stroke="#1c2b33" stroke-width="1.7"/><path d="M9 21 H2 Q1 15.5 7 15.5 Q10 15.5 11.5 17 M29 21 H36 Q37 15.5 31 15.5 Q28 15.5 26.5 17" fill="none" stroke="#1c2b33" stroke-width="1.7"/></svg>
<svg class="a" style="left:221px;top:413px;" width="38" height="26" viewBox="0 0 38 26"><rect x="1.2" y="1.2" width="35.6" height="23.6" rx="4" fill="none" stroke="#1c2b33" stroke-width="1.6"/><rect x="1.5" y="5.5" width="35" height="4" fill="#1c2b33"/><path d="M6 19 H15 M18 19 H28" stroke="#1c2b33" stroke-width="1.6"/></svg>
<svg class="a" style="left:215px;top:465px;" width="50" height="40" viewBox="0 0 50 40"><path d="M16.4 12 Q10.7 12 10.7 16 Q10.7 19.6 16.4 19.6 M16.4 12 V19.6 M16.4 12 H24 Q28.5 12 31.5 8.5 Q33.8 6.5 35.8 8.7 V21.2 M16.4 18.4 H24 Q27.2 18.6 28.6 20.6 M15.7 19.6 V25.2 Q15.7 28.2 18.4 28.2 Q20.9 28.2 20.9 25.2 V19.6" fill="none" stroke="#1c2b33" stroke-width="1.6" stroke-linejoin="round"/><polygon points="31.20,20.00 33.05,23.70 37.18,23.45 34.90,26.90 37.18,30.35 33.05,30.10 31.20,33.80 29.35,30.10 25.22,30.35 27.50,26.90 25.22,23.45 29.35,23.70" fill="#1c2b33"/><circle cx="31.2" cy="26.9" r="1.8" fill="#fff"/></svg>
<svg class="a" style="left:221px;top:525px;" width="38" height="38" viewBox="0 0 38 38"><circle cx="19" cy="11" r="9.5" fill="none" stroke="#1c2b33" stroke-width="1.7"/><circle cx="4.5" cy="29" r="3.3" fill="none" stroke="#1c2b33" stroke-width="1.6"/><circle cx="33.5" cy="29" r="3.3" fill="none" stroke="#1c2b33" stroke-width="1.6"/><circle cx="19" cy="33.5" r="3.3" fill="none" stroke="#1c2b33" stroke-width="1.6"/><path d="M19 20.5 V30 M13 18.5 L7 26.5 M25 18.5 L31 26.5" stroke="#1c2b33" stroke-width="1.6"/></svg>
<svg class="a" style="left:226px;top:595px;" width="27" height="25" viewBox="0 0 27 25"><path d="M0 1.5 H26.5 M0 12.5 H26.5 M0 23 H26.5" stroke="#1c2b33" stroke-width="1.7"/></svg>
<div class="a" style="left:221px;top:855px;width:37px;height:2px;background:#d9dde1"></div>
<div class="a" style="left:213px;top:868px;width:53px;height:53px;background:#e3f1ee;border-radius:50%"></div>
<div class="t" style="left:239.2px;top:884.0px;font-size:26px;color:#1f6878;transform:translateX(-50%)">?</div>
<svg class="a" style="left:224px;top:939px;" width="31" height="30" viewBox="0 0 31 30"><path d="M8 2 H27 Q29 2 29 4 V26 Q29 28 27 28 H6 Q2 28 2 24 V9 Q2 7 4 7 H8 V24" fill="none" stroke="#1c2b33" stroke-width="1.7"/><path d="M5 9 V25" stroke="#1c2b33" stroke-width="1.4"/><circle cx="14.5" cy="9.5" r="3" fill="#1c2b33"/><path d="M12 17 H25 M12 21 H25" stroke="#1c2b33" stroke-width="1.6"/></svg>
<svg class="a" style="left:224px;top:992px;" width="30" height="30" viewBox="0 0 30 30"><path d="M12.5 1.5 H17.5 L18.3 5.2 L21.5 6.9 L25 5.2 L28 9 L25.8 12 L26.3 15 L29 17.5 L27.2 21.8 L23.6 22 L21.5 25 L21.3 28.5 L17 29.5 L14.8 26.7 L11.2 26 L8.2 28 L4.3 25.5 L5 22 L3.2 19 L0.5 17 L1.5 12.5 L5 11.3 L6.4 8 L5 4.8 L8.6 2.1 L11.6 4.2 Z" fill="none" stroke="#1c2b33" stroke-width="1.9" stroke-linejoin="round" transform="translate(0,-0.5)"/><circle cx="15" cy="15" r="5" fill="none" stroke="#1c2b33" stroke-width="1.7"/></svg>
<svg class="a" style="left:224px;top:1044px;" width="30" height="32" viewBox="0 0 30 32"><path d="M4 24 Q8 21 8 15 Q8 7 15 7 Q22 7 22 15 Q22 21 26 24 Z" fill="none" stroke="#1c2b33" stroke-width="1.7" stroke-linejoin="round"/><path d="M12 26 Q12 30 15 30 Q18 30 18 26" fill="none" stroke="#1c2b33" stroke-width="1.7"/></svg>
<div class="a" style="left:233px;top:1035px;width:40px;height:26px;background:#d8321b;border-radius:13px"></div>
<div class="t" style="left:253.0px;top:1040.2px;font-size:17.5px;font-weight:700;color:#fff;transform:translateX(-50%)">99</div>
<svg class="a" style="left:224px;top:1098px;" width="32" height="32" viewBox="0 0 32 32"><circle cx="13.5" cy="13.5" r="11.5" fill="none" stroke="#1c2b33" stroke-width="1.7"/><path d="M22 22 L29.5 29.5" stroke="#1c2b33" stroke-width="2.6" stroke-linecap="round"/></svg>
<svg class="a" style="left:224px;top:1152px;" width="31" height="31" viewBox="0 0 31 31"><ellipse cx="15.5" cy="18.5" rx="8.5" ry="11" fill="none" stroke="#1c2b33" stroke-width="2.1"/><path d="M7.5 13 H23.5 M15.5 13 V29" stroke="#1c2b33" stroke-width="1.6"/><path d="M11 7 Q8 3 5 4 M20 7 Q23 3 26 4 M7 12 L2 10 M24 12 L29 10 M7 19 H1 M24 19 H30 M8 25 L3 28 M23 25 L28 28" fill="none" stroke="#1c2b33" stroke-width="1.6"/></svg>
<div class="a" style="left:199px;top:1268px;width:784px;height:620px;background:#f6f8fb;box-shadow:9px 10px 30px 4px rgba(0,0,0,.24)"></div>
<div class="a" style="left:210px;top:1281px;width:759px;height:607px;background:#fff;border-radius:10px 10px 0 0"></div>
<div class="a" style="left:1108px;top:1270px;width:784px;height:619px;background:#f6f8fb;box-shadow:9px 10px 30px 4px rgba(0,0,0,.24)"></div>
<div class="a" style="left:1113px;top:1276px;width:772px;height:613px;background:#fff;border-radius:10px 10px 0 0"></div>
<div class="a" style="left:2017px;top:1268px;width:784px;height:620px;background:#f6f8fb;box-shadow:9px 10px 30px 4px rgba(0,0,0,.24)"></div>
<div class="a" style="left:2028px;top:1280px;width:764px;height:608px;background:#fff;border-radius:10px 10px 0 0"></div>
<div class="t" style="left:224.0px;top:1303.5px;font-size:21.9px;font-weight:700;color:#111;">Results</div>
<div class="t" style="left:224.0px;top:1338.6px;font-size:56px;color:#111;letter-spacing:1.2px">23</div>
<div class="a" style="left:304px;top:1379px;width:25px;height:2px;background:#555d63"></div>
<div class="a" style="left:756.6px;top:1296px;width:197.89999999999998px;height:61.5px;border:2px solid #bfc7cf;border-radius:7px;background:#fff"></div>
<svg class="a" style="left:777px;top:1313px;" width="27" height="27" viewBox="0 0 27 27"><path d="M1.5 25.5 L2.5 19 L17 4.5 L22.5 10 L8 24.5 Z" fill="#1c2b33"/><path d="M19 2.5 L21 0.8 L26.2 6 L24.5 8 Z" fill="#1c2b33"/></svg>
<div class="t" style="left:819.0px;top:1313.7px;font-size:25.5px;color:#1c2b33;">Metric</div>
<svg class="a" style="left:910.5px;top:1320.5px;" width="20" height="11" viewBox="0 0 20 11"><path d="M0 0 H20 L10 11 Z" fill="#1c2b33"/></svg>
<div class="t" style="left:286.4px;top:1447.9px;font-size:23.7px;color:#1c2b33;">instagram</div>
<div class="a" style="left:286px;top:1499px;width:448px;height:20px;background:#a0d7f4;border-radius:3px"></div>
<div class="t" style="left:749.6px;top:1497.4px;font-size:22px;color:#1c2b33;">14</div>
<div class="t" style="left:286.4px;top:1544.9px;font-size:23.7px;color:#1c2b33;">facebook</div>
<div class="a" style="left:286px;top:1596px;width:287px;height:20px;background:#a0d7f4;border-radius:3px"></div>
<div class="t" style="left:588.6px;top:1594.4px;font-size:22px;color:#1c2b33;">9</div>
<div class="t" style="left:286.4px;top:1642.9px;font-size:23.7px;color:#1c2b33;">audience_network</div>
<div class="a" style="left:286px;top:1686px;width:4px;height:20px;background:#a0d7f4;border-radius:3px"></div>
<div class="t" style="left:286.4px;top:1725.9px;font-size:23.7px;color:#1c2b33;">messenger</div>
<div class="a" style="left:286px;top:1770px;width:4px;height:20px;background:#a0d7f4;border-radius:3px"></div>
<div class="a" style="left:199px;top:1268px;width:784px;height:620px;overflow:hidden">
<div class="a" style="left:181px;top:595px;width:29px;height:40px;background:#a0d7f4;border-radius:3px"></div>
<div class="t" style="left:223.3px;top:597.7px;font-size:23.5px;color:#1c2b33;">21 Feb 2025 || Re-target</div>
</div>
<div class="t" style="left:1127.8px;top:1297.3px;font-size:23.3px;font-weight:700;color:#111;">Cost per purchase</div>
<div class="t" style="left:1127.8px;top:1336.6px;font-size:56px;color:#111;letter-spacing:1.3px"><svg class="rs" viewBox="0 0 56 72"><path d="M6 5 H50 M6 22 H50 M16 5 Q38.5 5 38.5 22 Q38.5 39.5 17 39.5 H9 L38 70" fill="none" stroke="currentColor" stroke-width="6.3"/></svg> 219.96</div>
<div class="a" style="left:1373px;top:1375px;width:24px;height:2px;background:#555d63"></div>
<div class="a" style="left:1668px;top:1291.7px;width:201.5px;height:62.09999999999991px;border:2px solid #bfc7cf;border-radius:7px;background:#fff"></div>
<svg class="a" style="left:1689px;top:1310.4px;" width="27" height="27" viewBox="0 0 27 27"><path d="M1.5 25.5 L2.5 19 L17 4.5 L22.5 10 L8 24.5 Z" fill="#1c2b33"/><path d="M19 2.5 L21 0.8 L26.2 6 L24.5 8 Z" fill="#1c2b33"/></svg>
<div class="t" style="left:1732.0px;top:1310.8px;font-size:25.5px;color:#1c2b33;">Metric</div>
<svg class="a" style="left:1825.4px;top:1317.9px;" width="20" height="11" viewBox="0 0 20 11"><path d="M0 0 H20 L10 11 Z" fill="#1c2b33"/></svg>
<div class="t" style="left:1191.4px;top:1445.9px;font-size:23.7px;color:#1c2b33;">facebook</div>
<div class="a" style="left:1191.4px;top:1497px;width:389px;height:20px;background:#a0d7f4;border-radius:3px"></div>
<div class="t" style="left:1595.0px;top:1495.7px;font-size:22.8px;color:#1c2b33;"><svg class="rs" viewBox="0 0 56 72"><path d="M6 5 H50 M6 22 H50 M16 5 Q38.5 5 38.5 22 Q38.5 39.5 17 39.5 H9 L38 70" fill="none" stroke="currentColor" stroke-width="6.3"/></svg> 256.31</div>
<div class="t" style="left:1191.4px;top:1545.2px;font-size:23.7px;color:#1c2b33;">instagram</div>
<div class="a" style="left:1191.4px;top:1595.6px;width:297px;height:20px;background:#a0d7f4;border-radius:3px"></div>
<div class="t" style="left:1504.0px;top:1593.7px;font-size:22.8px;color:#1c2b33;"><svg class="rs" viewBox="0 0 56 72"><path d="M6 5 H50 M6 22 H50 M16 5 Q38.5 5 38.5 22 Q38.5 39.5 17 39.5 H9 L38 70" fill="none" stroke="currentColor" stroke-width="6.3"/></svg> 196.37</div>
<div class="t" style="left:1191.4px;top:1642.9px;font-size:23.7px;color:#1c2b33;">audience_network</div>
<div class="a" style="left:1191.4px;top:1695px;width:4px;height:20px;background:#a0d7f4;border-radius:3px"></div>
<div class="t" style="left:1209.0px;top:1692.7px;font-size:22.8px;color:#1c2b33;"><svg class="rs" viewBox="0 0 56 72"><path d="M6 5 H50 M6 22 H50 M16 5 Q38.5 5 38.5 22 Q38.5 39.5 17 39.5 H9 L38 70" fill="none" stroke="currentColor" stroke-width="6.3"/></svg> 0.00</div>
<div class="t" style="left:1191.4px;top:1741.5px;font-size:23.7px;color:#1c2b33;">messenger</div>
<div class="a" style="left:1191.4px;top:1793px;width:4px;height:20px;background:#a0d7f4;border-radius:3px"></div>
<div class="t" style="left:1209.0px;top:1791.7px;font-size:22.8px;color:#1c2b33;"><svg class="rs" viewBox="0 0 56 72"><path d="M6 5 H50 M6 22 H50 M16 5 Q38.5 5 38.5 22 Q38.5 39.5 17 39.5 H9 L38 70" fill="none" stroke="currentColor" stroke-width="6.3"/></svg> 0.00</div>
<div class="t" style="left:2042.3px;top:1300.1px;font-size:23.5px;font-weight:700;color:#111;">Purchase ROAS (return on ad spend)</div>
<div class="t" style="left:2043.8px;top:1338.1px;font-size:56px;color:#111;letter-spacing:2.7px">8.44</div>
<div class="a" style="left:2178.6px;top:1378px;width:23.90000000000009px;height:2px;background:#555d63"></div>
<div class="a" style="left:2577.8px;top:1295.4px;width:199.19999999999982px;height:61.59999999999991px;border:2px solid #bfc7cf;border-radius:7px;background:#fff"></div>
<svg class="a" style="left:2598px;top:1313px;" width="27" height="27" viewBox="0 0 27 27"><path d="M1.5 25.5 L2.5 19 L17 4.5 L22.5 10 L8 24.5 Z" fill="#1c2b33"/><path d="M19 2.5 L21 0.8 L26.2 6 L24.5 8 Z" fill="#1c2b33"/></svg>
<div class="t" style="left:2640.7px;top:1313.7px;font-size:25.5px;color:#1c2b33;">Metric</div>
<svg class="a" style="left:2733.3px;top:1320.5px;" width="20" height="11" viewBox="0 0 20 11"><path d="M0 0 H20 L10 11 Z" fill="#1c2b33"/></svg>
<div class="t" style="left:2105.0px;top:1447.9px;font-size:23.7px;color:#1c2b33;">instagram</div>
<div class="a" style="left:2105px;top:1499px;width:430.5px;height:20px;background:#a0d7f4;border-radius:3px"></div>
<div class="t" style="left:2550.0px;top:1496.9px;font-size:22.6px;color:#1c2b33;">9.70</div>
<div class="t" style="left:2105.0px;top:1544.9px;font-size:23.7px;color:#1c2b33;">facebook</div>
<div class="a" style="left:2105px;top:1596px;width:308.5px;height:20px;background:#a0d7f4;border-radius:3px"></div>
<div class="t" style="left:2428.0px;top:1593.9px;font-size:22.6px;color:#1c2b33;">6.94</div>
<div class="t" style="left:2105.0px;top:1642.9px;font-size:23.7px;color:#1c2b33;">audience_network</div>
<div class="a" style="left:2105px;top:1686px;width:4px;height:20px;background:#a0d7f4;border-radius:3px"></div>
<div class="t" style="left:2105.0px;top:1725.9px;font-size:23.7px;color:#1c2b33;">messenger</div>
<div class="a" style="left:2105px;top:1770px;width:4px;height:20px;background:#a0d7f4;border-radius:3px"></div>
<div class="a" style="left:2017px;top:1268px;width:784px;height:620px;overflow:hidden">
<div class="a" style="left:182.5999999999999px;top:597px;width:29px;height:40px;background:#a0d7f4;border-radius:3px"></div>
<div class="t" style="left:225.0px;top:597.7px;font-size:23.5px;color:#1c2b33;">21 Feb 2025 || Re-target</div>
</div>
<svg class="a" style="left:2540px;top:1900px;" width="400" height="180" viewBox="0 0 400 180"><defs>
<linearGradient id="qg" gradientUnits="userSpaceOnUse" x1="45" y1="45" x2="130" y2="140"><stop offset="0" stop-color="#1399dc"/><stop offset="1" stop-color="#1546a0"/></linearGradient>
<linearGradient id="hg" x1="0" y1="0" x2="1" y2="1"><stop offset="0" stop-color="#28b8ee"/><stop offset="1" stop-color="#4a5cb0"/></linearGradient>
<linearGradient id="ag" x1="0" y1="0" x2="1" y2="0"><stop offset="0" stop-color="#139be0"/><stop offset="1" stop-color="#1560b8"/></linearGradient>
<clipPath id="rc"><path d="M0 0 H200 V200 H0 Z M96.5 119.5 L106 110 L145 149 L135.5 158.5 Z" clip-rule="evenodd"/></clipPath>
</defs>
<g fill="url(#qg)">
<path clip-path="url(#rc)" fill-rule="evenodd" d="M87.4 53.5 A42 42 0 1 1 87.3 53.5 Z M87.4 71.8 A23.7 23.7 0 1 0 87.5 71.8 Z"/>
<rect x="70" y="45.3" width="12.2" height="20"/>
<path d="M95 47 H110 Q112 47 112 49 V62 L104 70 H95 Z"/>
<path d="M47.8 57.5 H57 Q59.5 57.5 59.5 60 V63.5 H66.8 V66.8 H72.8 V76 H47.8 Z"/>
<path d="M47.8 70 H62 V100 H47.8 Z"/>
<path d="M39.3 86.2 H48.2 V100 H45 Q39.3 100 39.3 96 Z"/>
</g>
<path d="M82.2 44 V58 Q82.2 64.4 88.6 64.4 Q95 64.4 95 58 V44 Z" fill="#eeeeee"/>
<rect x="55" y="75" width="7" height="6.7" fill="#eeeeee"/><rect x="49.8" y="88.6" width="9.3" height="8.9" fill="#eeeeee"/>
<path d="M106.5 108.5 L120 122 L124 118 L110.5 104.5 Z" fill="#0e3a78"/>
<path d="M99.1 116.5 L108 108 L134 134 L125 142.8 Z" fill="url(#hg)"/>
<g fill="#1196d8">
<rect x="28" y="36.8" width="11.3" height="11.4" rx="2"/><rect x="59.5" y="34.8" width="8.9" height="8.9" rx="1.8"/><rect x="30" y="79" width="6.4" height="6.4" rx="1.3"/>
</g>
<path d="M36 45 L49 58 M66 42 L71 47 M34 83 L40 88" stroke="#1196d8" stroke-width="3.2"/>
<path d="M76 28 L90 42" stroke="#4cc3d6" stroke-width="2.4"/>
<g fill="#57c4cc">
<rect x="37.2" y="25" width="6.5" height="6.6" rx="1.5"/><rect x="50.2" y="27.1" width="7.7" height="8.1" rx="1.5"/><rect x="50.2" y="45.3" width="7.7" height="7.3" rx="1.5"/>
<rect x="21" y="50.2" width="6.5" height="6.5" rx="1.5"/><rect x="32.4" y="59.5" width="12.1" height="11.7" rx="2"/><rect x="23.1" y="71.6" width="6.5" height="6.5" rx="1.5"/>
<rect x="23.9" y="86.2" width="6.5" height="6.5" rx="1.5"/><rect x="33.2" y="98.7" width="5.3" height="5.3" rx="1.3"/><rect x="73.7" y="25.1" width="5.2" height="5.3" rx="1.3"/>
<rect x="79.3" y="30.8" width="5.7" height="5.2" rx="1.3"/><rect x="86.2" y="37.7" width="8.5" height="8" rx="1.5" fill="#3fbfdc"/><rect x="95.9" y="30" width="6.9" height="6.4" rx="1.5" fill="#3fbfdc"/>
</g>
<g fill="none" stroke="#1553a8" stroke-width="5.2">
<path d="M142.8 68.8 V97 Q142.8 117 160 117 Q176.8 117 176.8 97 V68.8"/>
<path d="M196 68.8 V117"/>
<path d="M216.6 68.8 V114.4 H251"/>
<path d="M261 68.8 V114.4 H295.6"/>
<path d="M306.5 68.8 V117"/>
</g><path d="M319.5 68.8 H326.5 L365.5 117 H358.5 Z M357.5 68.8 H364.5 L326.5 117 H319.5 Z" fill="#1553a8"/><g>
</g>
<g fill="none" stroke="url(#ag)" stroke-width="3.4">
<path d="M289 149.5 L298 129 L307.5 149.5 M292.5 142 H304"/>
<path d="M311.5 129 V148 H318 Q330 148 330 138.5 Q330 129 318 129 H311.5"/>
</g>
<path d="M332.5 142.5 H339.5" stroke="#1588d4" stroke-width="3.4"/>
<g fill="none" stroke="url(#ag)" stroke-width="3.4">
<path d="M341 129 L362 149.5 M362 129 L341 149.5"/>
</g></svg>
</body></html>
